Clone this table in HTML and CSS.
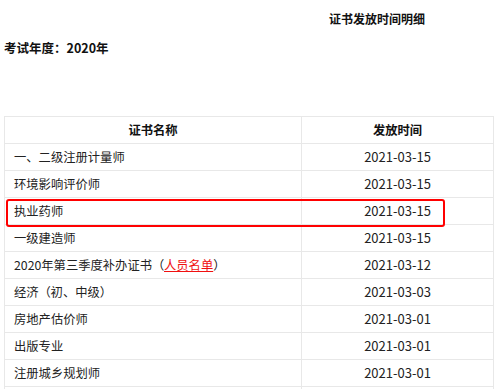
FILE: index.html
```html
<!DOCTYPE html>
<html lang="zh-CN">
<head>
<meta charset="utf-8">
<title>证书发放时间明细</title>
<link rel="stylesheet" href="styles.css">
</head>
<body>
<div class="page">
  <h1 class="title">证书发放时间明细</h1>
  <p class="year">考试年度：2020年</p>
  <div class="table-wrap">
    <table class="cert-table">
      <thead>
        <tr><th class="col-name">证书名称</th><th class="col-date">发放时间</th></tr>
      </thead>
      <tbody>
        <tr><td>一、二级注册计量师</td><td class="date">2021-03-15</td></tr>
        <tr><td>环境影响评价师</td><td class="date">2021-03-15</td></tr>
        <tr><td>执业药师</td><td class="date">2021-03-15</td></tr>
        <tr><td>一级建造师</td><td class="date">2021-03-15</td></tr>
        <tr><td>2020年第三季度补办证书<span class="paren">（</span><a class="link" href="#">人员名单</a><span class="paren">）</span></td><td class="date">2021-03-12</td></tr>
        <tr><td>经济<span class="paren">（</span>初、中级<span class="paren">）</span></td><td class="date">2021-03-03</td></tr>
        <tr><td>房地产估价师</td><td class="date">2021-03-01</td></tr>
        <tr><td>出版专业</td><td class="date">2021-03-01</td></tr>
        <tr><td>注册城乡规划师</td><td class="date">2021-03-01</td></tr>
        <tr><td>&nbsp;</td><td class="date">&nbsp;</td></tr>
      </tbody>
    </table>
    <div class="highlight"></div>
  </div>
</div>
</body>
</html>
```

FILE: styles.css
```css
html, body {
  margin: 0;
  padding: 0;
  background: #fff;
  overflow: hidden;
}
body {
  font-family: "Microsoft YaHei", "Noto Sans CJK SC", "Noto Sans", sans-serif;
  color: #222;
  font-size: 12px;
}
.page {
  padding: 0 6px 0 4px;
}
.title {
  margin: 0;
  padding: 10px 0 0 325px;
  font-size: 12px;
  font-weight: bold;
  line-height: 17px;
  color: #111;
}
.year {
  margin: 12px 0 0 0;
  font-size: 12.5px;
  font-weight: bold;
  line-height: 17px;
  color: #111;
}
.table-wrap {
  position: relative;
  margin-top: 60px;
}
.cert-table {
  width: 490px;
  border-collapse: collapse;
  table-layout: fixed;
}
.cert-table th,
.cert-table td {
  border: 1px solid #e8e8e8;
  height: 26px;
  padding: 0 9px;
  line-height: 26px;
  font-size: 12.3px;
  white-space: nowrap;
}
.cert-table th {
  font-weight: bold;
  text-align: center;
  color: #111;
}
.col-name { width: 278px; }
.col-date { width: auto; }
.cert-table td.date {
  text-align: center;
  padding: 0;
  font-size: 13px;
}
.paren {
  display: inline-block;
  width: 12px;
  text-align: center;
}
.link {
  color: #f01010;
  text-decoration: underline;
}
.highlight {
  position: absolute;
  left: 2px;
  top: 83px;
  width: 435px;
  height: 24px;
  border: 2px solid #f00;
  border-radius: 3px;
}
```
